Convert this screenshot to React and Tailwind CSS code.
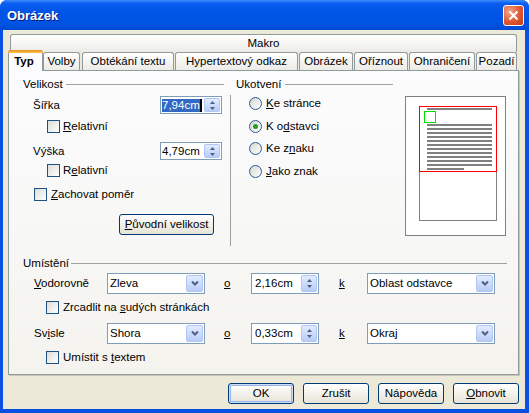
import React from "react";

// Windows XP styled "Obrázek" dialog (OpenOffice image properties)

const Check = () => (
  <span className="block w-[13px] h-[13px] shrink-0 border border-[#1C5180] bg-gradient-to-br from-[#DCDCD7] to-white" />
);

const Radio = ({ on }) => (
  <span className="flex w-[13px] h-[13px] shrink-0 items-center justify-center rounded-full border border-[#2F5A8A] bg-gradient-to-br from-[#D6D6D0] to-white">
    {on && <span className="block w-[5px] h-[5px] rounded-full bg-[#21A121]" />}
  </span>
);

const SpinArrows = () => (
  <svg width="5" height="9" viewBox="0 0 5 9">
    <path d="M2.5 0 L5 3 H0 Z" fill="#4D6185" />
    <path d="M0 6 H5 L2.5 9 Z" fill="#4D6185" />
  </svg>
);

const Chevron = () => (
  <svg width="8" height="5" viewBox="0 0 8 5">
    <path d="M1 0.5 L4 3.5 L7 0.5" stroke="#4D6185" strokeWidth="2" fill="none" />
  </svg>
);

const SpinSmall = ({ children }) => (
  <div className="flex items-center w-[62px] h-[18px] mr-[2px] border border-[#7F9DB9] bg-white">
    <div className="flex-1 flex items-center pl-px">{children}</div>
    <span className="flex items-center justify-center w-[16px] h-[14px] mr-px rounded-[2px] border border-[#B2C6F3] bg-gradient-to-b from-[#E3EBFE] to-[#B8CBF8]">
      <SpinArrows />
    </span>
  </div>
);

const SpinBig = ({ children }) => (
  <div className="flex items-center w-[68px] h-[21px] border border-[#7F9DB9] bg-white">
    <span className="flex-1 pl-[3px]">{children}</span>
    <span className="flex items-center justify-center w-[16px] h-[17px] mr-px rounded-[2px] border border-[#B2C6F3] bg-gradient-to-b from-[#E3EBFE] to-[#B8CBF8]">
      <SpinArrows />
    </span>
  </div>
);

const Combo = ({ children, wide }) => (
  <div
    className={
      wide
        ? "flex items-center w-[128px] h-[21px] border border-[#7F9DB9] bg-white"
        : "flex items-center w-[98px] h-[21px] border border-[#7F9DB9] bg-white"
    }
  >
    <span className="flex-1 pl-[2px]">{children}</span>
    <span className="flex items-center justify-center w-[17px] h-[17px] mr-px rounded-[2px] border border-[#B2C6F3] bg-gradient-to-b from-[#E3EBFE] to-[#B8CBF8]">
      <Chevron />
    </span>
  </div>
);

const XpButton = ({ children, className = "" }) => (
  <button
    className={
      "flex items-center justify-center h-[21px] rounded-[3px] border border-[#003C74] bg-gradient-to-b from-white to-[#E6E3D6] text-black " +
      className
    }
  >
    {children}
  </button>
);

const Tab = ({ children, className = "" }) => (
  <div
    className={
      "flex items-center justify-center h-[18px] border border-b-0 border-[#919B9C] rounded-t-[3px] bg-gradient-to-b from-white to-[#ECEBE6] " +
      className
    }
  >
    {children}
  </div>
);

const Preview = () => {
  const lines = [];
  for (let i = 0; i < 11; i++) {
    lines.push(<rect key={i} x="22" y={28 + i * 4} width="65" height="2" fill="#808080" />);
  }
  return (
    <svg width="101" height="140" viewBox="0 0 101 140" className="ml-[12px] mt-[18px] shrink-0">
      <rect x="0.5" y="0.5" width="100" height="139" fill="#fff" stroke="#808080" />
      <rect x="14.5" y="10.5" width="77" height="114" fill="none" stroke="#808080" />
      <rect x="22" y="12" width="65" height="2" fill="#808080" />
      {lines}
      <rect x="22" y="72" width="37" height="2" fill="#808080" />
      <rect x="14.5" y="10.5" width="77" height="65" fill="none" stroke="#FF0000" />
      <rect x="19.5" y="15.5" width="11" height="11" fill="none" stroke="#00E000" />
    </svg>
  );
};

export default function App() {
  return (
    <div className="w-[529px] h-[413px] flex flex-col rounded-t-[7px] bg-[#0A50E2] font-['Liberation_Sans',Arial,sans-serif] text-[11.5px] leading-[13px] text-black">
      {/* title bar */}
      <div className="h-[30px] shrink-0 flex items-center pl-[7px] pr-[5px] rounded-t-[7px] bg-[linear-gradient(to_bottom,#3C8CF8_0%,#0A5CF0_12%,#0055E8_40%,#0054E3_75%,#0049D6_100%)]">
        <span className="text-[13px] font-bold text-white [text-shadow:1px_1px_0_#0A1C7A]">Obrázek</span>
        <span className="ml-auto flex items-center justify-center w-[21px] h-[21px] rounded-[3px] border border-white bg-[radial-gradient(circle_at_30%_30%,#F5A58A,#E0562F_55%,#C23A15)]">
          <svg width="11" height="11" viewBox="0 0 11 11">
            <path d="M1.5 1.5 L9.5 9.5 M9.5 1.5 L1.5 9.5" stroke="#fff" strokeWidth="2" />
          </svg>
        </span>
      </div>

      {/* body */}
      <div className="flex-1 ml-[3px] mr-[4px] mb-[4px] bg-[#ECE9D8] flex flex-col pt-[4px]">
        {/* tabs */}
        <Tab className="ml-[7px] w-[507px]">Makro</Tab>
        <div className="flex ml-[5px] h-[18px]">
          <div className="relative z-10 -mt-[2px] w-[35px] h-[21px] flex flex-col border-x border-[#919B9C] rounded-t-[3px] bg-[#FCFCFE]">
            <div className="-mx-px h-[3px] rounded-t-[3px] bg-[linear-gradient(to_bottom,#E68B2C,#FFC73C)]" />
            <div className="flex-1 flex items-center justify-center font-bold pb-[2px] pr-[3px]">Typ</div>
          </div>
          <Tab className="w-[37px]">Volby</Tab>
          <Tab className="ml-[2px] w-[92px]">Obtékání textu</Tab>
          <Tab className="ml-px w-[123px]">Hypertextový odkaz</Tab>
          <Tab className="ml-px w-[54px]">Obrázek</Tab>
          <Tab className="ml-px w-[54px]">Oříznout</Tab>
          <Tab className="ml-px w-[66px]">Ohraničení</Tab>
          <Tab className="ml-px w-[41px]">Pozadí</Tab>
        </div>

        {/* panel */}
        <div className="ml-[5px] w-[511px] h-[305px] shrink-0 border border-[#919B9C] bg-gradient-to-b from-[#FCFCFE] to-[#F4F3EE] shadow-[1px_1px_0_#C9C6B6] pl-[14px] pt-[7px] flex flex-col">
          <div className="flex">
            {/* Velikost */}
            <div className="w-[201px] flex flex-col">
              <div className="h-[13px] flex items-center">
                <span>Velikost</span>
                <div className="flex-1 ml-[3px] h-px bg-[#A0A0A0]" />
              </div>
              <div className="mt-[5px] h-[18px] flex items-center pl-[10px]">
                <span className="flex-1">Šířka</span>
                <SpinSmall>
                  <span className="bg-[#316AC5] text-white">7,94cm</span>
                  <span className="block w-[2px] h-[13px] bg-black" />
                </SpinSmall>
              </div>
              <div className="mt-[6px] h-[13px] flex items-center pl-[24px]">
                <Check />
                <span className="ml-[3px]">
                  <u>R</u>elativní
                </span>
              </div>
              <div className="mt-[9px] h-[18px] flex items-center pl-[10px]">
                <span className="flex-1">Výška</span>
                <SpinSmall>
                  <span>4,79cm</span>
                </SpinSmall>
              </div>
              <div className="mt-[4px] h-[13px] flex items-center pl-[24px]">
                <Check />
                <span className="ml-[3px]">
                  R<u>e</u>lativní
                </span>
              </div>
              <div className="mt-[11px] h-[13px] flex items-center pl-[11px]">
                <Check />
                <span className="ml-[4px]">
                  <u>Z</u>achovat poměr
                </span>
              </div>
              <XpButton className="mt-[13px] ml-[96px] w-[95px]">
                <span>
                  <u>P</u>ůvodní velikost
                </span>
              </XpButton>
            </div>

            <div className="ml-[6px] mt-[17px] w-px h-[151px] bg-[#A0A0A0]" />

            {/* Ukotvení */}
            <div className="ml-[5px] w-[157px] flex flex-col">
              <div className="h-[13px] flex items-center">
                <span>Ukotvení</span>
                <div className="flex-1 ml-[4px] h-px bg-[#A0A0A0]" />
              </div>
              <div className="mt-[6px] h-[13px] flex items-center pl-[13px]">
                <Radio />
                <span className="ml-[4px]">
                  <u>K</u>e stránce
                </span>
              </div>
              <div className="mt-[10px] h-[13px] flex items-center pl-[13px]">
                <Radio on />
                <span className="ml-[4px]">
                  K o<u>d</u>stavci
                </span>
              </div>
              <div className="mt-[9px] h-[13px] flex items-center pl-[13px]">
                <Radio />
                <span className="ml-[4px]">
                  Ke z<u>n</u>aku
                </span>
              </div>
              <div className="mt-[10px] h-[13px] flex items-center pl-[13px]">
                <Radio />
                <span className="ml-[4px]">
                  <u>J</u>ako znak
                </span>
              </div>
            </div>

            <Preview />
          </div>

          {/* Umístění */}
          <div className="mt-[11px] w-[484px] h-[13px] flex items-center">
            <span>Umístění</span>
            <div className="flex-1 ml-[2px] h-px bg-[#A0A0A0]" />
          </div>
          <div className="mt-[3px] h-[21px] flex items-center pl-[11px]">
            <span className="w-[73px]">
              <u>V</u>odorovně
            </span>
            <Combo>Zleva</Combo>
            <span className="w-[46px] pl-[19px]">
              <u>o</u>
            </span>
            <SpinBig>2,16cm</SpinBig>
            <span className="w-[48px] pl-[20px]">
              <u>k</u>
            </span>
            <Combo wide>Oblast odstavce</Combo>
          </div>
          <div className="mt-[7px] h-[13px] flex items-center pl-[23px]">
            <Check />
            <span className="ml-[4px]">
              Zrcadlit na <u>s</u>udých stránkách
            </span>
          </div>
          <div className="mt-[9px] h-[21px] flex items-center pl-[11px]">
            <span className="w-[73px]">
              Sv<u>i</u>sle
            </span>
            <Combo>Shora</Combo>
            <span className="w-[46px] pl-[19px]">
              <u>o</u>
            </span>
            <SpinBig>0,33cm</SpinBig>
            <span className="w-[48px] pl-[20px]">
              <u>k</u>
            </span>
            <Combo wide>Okraj</Combo>
          </div>
          <div className="mt-[7px] h-[13px] flex items-center pl-[23px]">
            <Check />
            <span className="ml-[4px]">
              Umístit s <u>t</u>extem
            </span>
          </div>
        </div>

        {/* buttons */}
        <div className="mt-[8px] flex justify-end gap-[9px] pr-[6px]">
          <XpButton className="w-[66px] shadow-[inset_0_0_0_1px_#CEDDF8,inset_0_0_0_2px_#98B4EA]">OK</XpButton>
          <XpButton className="w-[66px]">Zrušit</XpButton>
          <XpButton className="w-[66px]">Nápověda</XpButton>
          <XpButton className="w-[66px]">
            <span>
              <u>O</u>bnovit
            </span>
          </XpButton>
        </div>
      </div>
    </div>
  );
}
